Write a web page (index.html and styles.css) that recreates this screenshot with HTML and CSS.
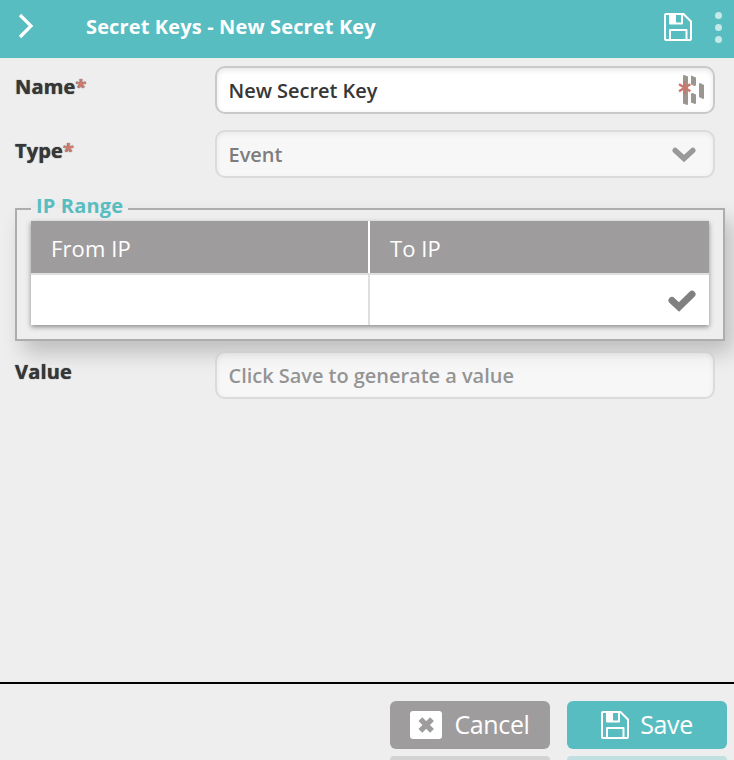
FILE: index.html
```
<!DOCTYPE html>
<html lang="en">
<head>
<meta charset="utf-8">
<title>Secret Keys</title>
<link rel="stylesheet" href="styles.css">
</head>
<body>
<svg width="0" height="0" class="defs" aria-hidden="true">
  <symbol id="floppy" viewBox="0 0 28 28">
    <path d="M2 1H19.5L27 8.5V26a1 1 0 0 1-1 1H2a1 1 0 0 1-1-1V2a1 1 0 0 1 1-1Z" fill="none" stroke="currentColor" stroke-width="2"/>
    <path d="M6 1V10.500H18V1M6 27V17H22.500V27" fill="none" stroke="currentColor" stroke-width="2" stroke-linejoin="round"/>
    <path d="M6 1H12V10.500H6Z" fill="currentColor"/>
  </symbol>
</svg>
<header class="topbar">
  <svg class="back" viewBox="0 0 16 26"><path d="M2 2L13 13L2 24" fill="none" stroke="currentColor" stroke-width="3.200"/></svg>
  <h1>Secret Keys - New Secret Key</h1>
  <svg class="save-icon"><use href="#floppy"/></svg>
  <div class="dots"><i></i><i></i><i></i></div>
</header>
<main>
  <div class="row">
    <label>Name<span class="req">*</span></label>
    <div class="field">New Secret Key
      <svg class="badge" viewBox="0 0 28 32">
        <g fill="#9c9691"><path d="M5 1.500L6 1L10 2.500V30.500L9 31L5 29.500ZM13 1.500L18 3.500V11.500L16.500 12L13 10.500ZM13 19.500L14.500 19L18 20.500V29.500L17 30L13 28.500ZM21 9.500L22 9L26 11V24.500L25 25L21 23Z"/></g>
        <path d="M6.700 7V20.500M1 10.200L12.400 17.200M12.400 10.200L1 17.200" stroke="#c9796b" stroke-width="2.400" fill="none"/>
      </svg>
    </div>
  </div>
  <div class="row">
    <label>Type<span class="req">*</span></label>
    <div class="field disabled">Event
      <svg class="chevron" viewBox="0 0 24 16"><path d="M3.200 3.400L12 11.500L20.800 3.400" fill="none" stroke-width="5.400" stroke-linecap="round"/></svg>
    </div>
  </div>
  <fieldset>
    <legend>IP Range</legend>
    <div class="grid">
      <div class="head">From IP</div>
      <div class="head">To IP</div>
      <div class="cell"></div>
      <div class="cell"><svg class="check" viewBox="0 0 28 22"><path d="M4 10.500L11 17L24 4.300" fill="none" stroke="#808080" stroke-width="7" stroke-linecap="round"/></svg></div>
    </div>
  </fieldset>
  <div class="row">
    <label>Value</label>
    <div class="field disabled hint">Click Save to generate a value</div>
  </div>
</main>
<footer>
  <div class="button cancel">
    <svg viewBox="0 0 32 28"><rect width="32" height="28" rx="3" fill="#fff"/><path d="M10.400 8.200L22 19.800M22 8.200L10.400 19.800" stroke="#9f9c9d" stroke-width="5.400"/></svg>
    <span>Cancel</span>
  </div>
  <div class="button save">
    <svg><use href="#floppy"/></svg>
    <span>Save</span>
  </div>
</footer>
</body>
</html>
```
FILE: styles.css
```
* { box-sizing: border-box; }
html, body { height: 100%; overflow: hidden; }
body {
  margin: 0;
  background: #eee;
  color: #373737;
  font: 600 20px/28px "Open Sans", sans-serif;
  display: flex;
  flex-direction: column;
}
svg { display: block; flex: none; }
.defs { position: absolute; }

.topbar {
  height: 58px;
  flex: none;
  display: flex;
  align-items: center;
  padding: 0 12px 4px 17.5px;
  background: #58bdc0;
  color: #fff;
}
.back { width: 16px; height: 26px; margin: -2px 52.5px 0 0; }
h1 { margin: 0; flex: 1; font-size: 20px; font-weight: 700; letter-spacing: .14px; }
.save-icon { width: 28px; height: 28px; margin-right: 23px; }
.dots { display: flex; flex-direction: column; gap: 5px; }
.dots i { width: 7px; height: 7px; border-radius: 50%; background: #c5e8e9; }

main { flex: 1; padding: 8px 9px 0 15px; }
.row { display: flex; height: 48px; margin-bottom: 16px; }
label {
  width: 200px;
  padding-top: 7px;
  font-weight: 700;
  letter-spacing: .15px;
  text-shadow: 0 0 1px #373737;
}
.req { color: #d07b70; }
.field {
  width: 500px;
  height: 48px;
  display: flex;
  align-items: center;
  justify-content: space-between;
  padding: 2px 7px 0 11.5px;
  border: 2px solid #c9c9c9;
  border-radius: 10px;
  background: #fff;
  letter-spacing: -.03px;
  box-shadow: inset 0 2px 5px rgba(0, 0, 0, .1);
}
.disabled { color: #222; border-color: #ccc; opacity: .55; }
.hint { color: #4c4c4c; }
.badge { width: 28px; height: 32px; margin-top: -2px; }
.chevron { width: 24px; height: 16px; margin-right: 10.5px; }
.chevron path { stroke: #555; }

fieldset {
  min-width: 0;
  margin: 0 0 10px;
  padding: 0 14px 14px;
  border: 2px solid #adadad;
  box-shadow: 8px 12px 20px rgba(0, 0, 0, .2);
}
legend {
  padding: 0 5px 7px;
  color: #58bdc0;
  font-weight: 700;
  line-height: 23px;
  letter-spacing: .15px;
}
.grid {
  display: grid;
  grid-template-columns: 339px 1fr;
  grid-template-rows: 54px 50px;
  margin-top: -3px;
  background: #fff;
  box-shadow: 0 2px 5px rgba(0, 0, 0, .42);
}
.head {
  padding: 13px 20px 0;
  background: #9f9c9d;
  border-bottom: 2px solid #e0dfdf;
  color: #fff;
  font-size: 22px;
  font-weight: 400;
  letter-spacing: .1px;
}
.head:first-child { box-shadow: inset -2px 0 #fff; }
.cell { display: flex; align-items: center; justify-content: flex-end; padding: 2px 13.5px 0 0; }
.cell:nth-child(3) { border-right: 2px solid #e0dfdf; }
.check { width: 28px; height: 22px; }

footer {
  height: 78px;
  flex: none;
  display: flex;
  justify-content: flex-end;
  gap: 17px;
  padding: 17px 7px 0;
  border-top: 2px solid #000;
}
.button {
  position: relative;
  width: 160px;
  height: 48px;
  display: flex;
  align-items: center;
  justify-content: center;
  gap: 12px;
  border-radius: 6px;
  background: #9f9c9d;
  color: #fff;
  font-size: 25px;
  font-weight: 400;
  letter-spacing: -.35px;
}
.button span { margin-top: -2px; }
.save { background: #58bdc0; }
.button::after {
  content: "";
  position: absolute;
  top: 55px;
  left: 0;
  width: 100%;
  height: 4px;
  border-radius: 6px 6px 0 0;
  background: #d3d3d3;
}
.save::after { background: #c2e0e1; }
.cancel svg { width: 32px; height: 28px; }
.save svg { width: 28px; height: 28px; }
.save { gap: 11px; }
```
